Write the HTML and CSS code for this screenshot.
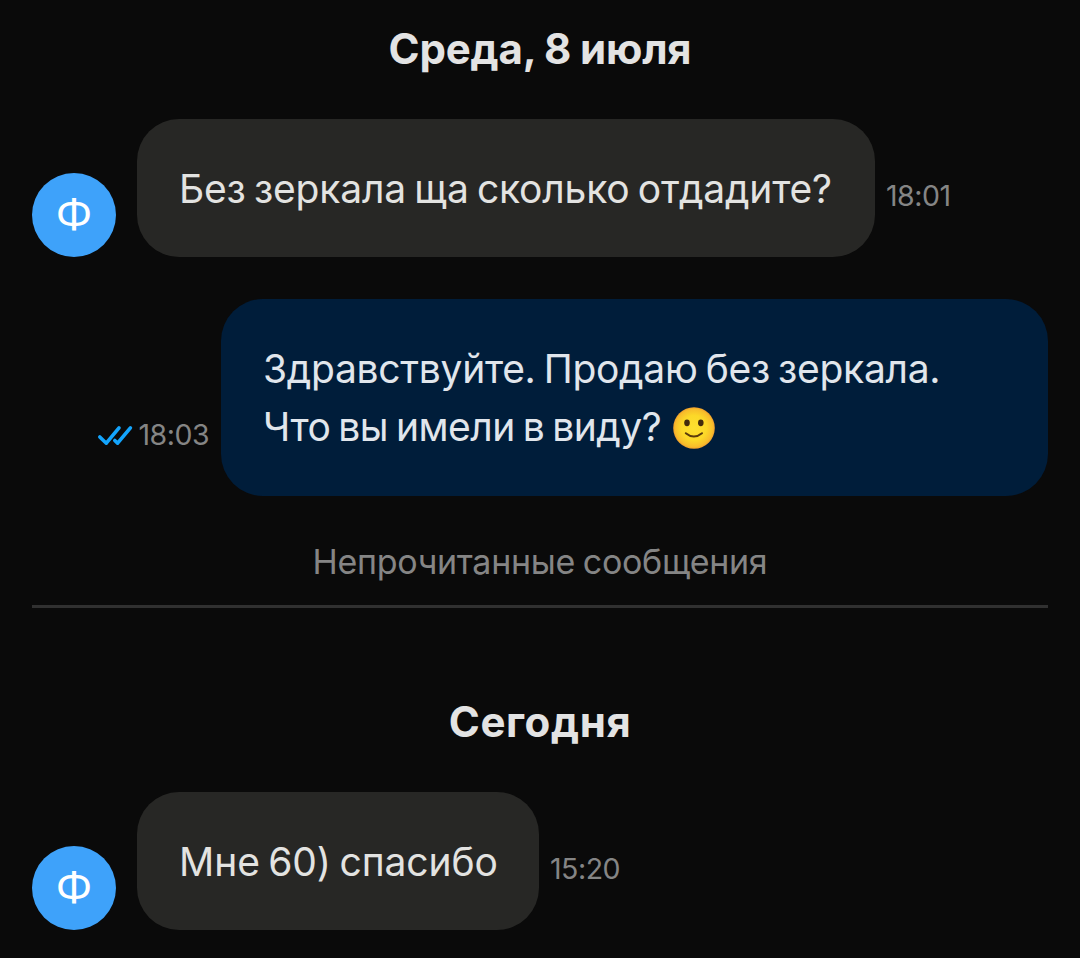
FILE: index.html
```
<!DOCTYPE html>
<html lang="ru">
<head>
    <meta charset="UTF-8">
    <meta name="viewport" content="width=device-width, initial-scale=1.0">
    <title>Чат</title>
    <link rel="stylesheet" href="styles.css">
</head>
<body>
    <main class="chat">
        <h2 class="day day-wed">Среда, 8 июля</h2>

        <div class="message incoming">
            <div class="avatar">Ф</div>
            <div class="bubble bubble-question"><p class="line">Без зеркала ща сколько отдадите?</p></div>
            <time class="time">18:01</time>
        </div>

        <div class="message outgoing">
            <div class="status">
                <svg class="checks" viewBox="0 0 36 22" width="36" height="22">
                    <path d="M2.8 12 L9.3 18.2 L22 2.8 M17.8 15.4 L20.6 18.2 L33.4 2.8"/>
                </svg>
                <time class="time">18:03</time>
            </div>
            <div class="bubble bubble-reply">
                <p class="line line-hello">Здравствуйте. Продаю без зеркала.</p>
                <p class="line line-what"><span>Что вы имели в виду?</span>
                    <svg class="emoji" viewBox="0 0 42 42" width="42" height="42">
                        <defs>
                            <radialGradient id="face">
                                <stop offset="0" stop-color="#fde030"/>
                                <stop offset="0.6" stop-color="#fcd828"/>
                                <stop offset="0.9" stop-color="#f8bd2b"/>
                                <stop offset="1" stop-color="#f2a02c"/>
                            </radialGradient>
                        </defs>
                        <circle cx="21" cy="21" r="20.8" fill="url(#face)"/>
                        <ellipse cx="14" cy="15.8" rx="2.8" ry="3.4" fill="#422b0d"/>
                        <ellipse cx="27.8" cy="15.8" rx="2.8" ry="3.4" fill="#422b0d"/>
                        <path d="M12.8 26.2 Q20.8 32.8 29 26.2" fill="none" stroke="#5a3a0c" stroke-width="2" stroke-linecap="round"/>
                    </svg>
                </p>
            </div>
        </div>

        <div class="unread"><span>Непрочитанные сообщения</span></div>

        <h2 class="day day-today">Сегодня</h2>

        <div class="message incoming">
            <div class="avatar">Ф</div>
            <div class="bubble bubble-thanks"><p class="line line-thanks">Мне 60) спасибо</p></div>
            <time class="time">15:20</time>
        </div>
    </main>
</body>
</html>
```
FILE: styles.css
```
* {
    margin: 0;
    padding: 0;
    box-sizing: border-box;
}

body {
    font-family: Inter, "Noto Sans", sans-serif;
    background-color: #0a0a0a;
    color: #e3e3e1;
}

.chat {
    padding: 21px 32px 28px;
}

.day {
    font-size: 42px;
    line-height: 56px;
    font-weight: 700;
    color: #e3e3e3;
    text-align: center;
    white-space: nowrap;
}

.day-wed {
    letter-spacing: -0.18px;
    word-spacing: -1px;
}

.day-today {
    letter-spacing: 0.6px;
}

.message {
    display: flex;
    align-items: flex-end;
    margin-top: 42px;
}

.outgoing {
    justify-content: flex-end;
}

.avatar {
    width: 84px;
    height: 84px;
    margin-right: 21px;
    border-radius: 50%;
    background-color: #3ea2fa;
    color: #fff;
    font-family: "Noto Sans", sans-serif;
    font-size: 44px;
    line-height: 79px;
    text-align: center;
}

.bubble {
    padding: 41px 42px 39px;
    border-radius: 42px;
    background-color: #272725;
}

.bubble-question {
    width: 738px;
}

.bubble-reply {
    width: 827px;
    padding-bottom: 40px;
    background-color: #001d3a;
    color: #e1e6ec;
}

.bubble-thanks {
    width: 402px;
}

.line {
    font-size: 39px;
    line-height: 58px;
    letter-spacing: -0.18px;
    word-spacing: -2.5px;
    white-space: nowrap;
}

.line-hello {
    letter-spacing: -0.29px;
}

.line-thanks {
    letter-spacing: -0.07px;
}

.line-what {
    display: flex;
    align-items: center;
    gap: 12px;
    letter-spacing: -0.5px;
}

.emoji {
    margin-top: 1px;
}

.time {
    margin: 0 12px 44px 11px;
    color: #858585;
    font-size: 28.5px;
    line-height: 34px;
    letter-spacing: -0.5px;
}

.status {
    display: flex;
    align-items: flex-end;
}

.status .time {
    margin-left: 5px;
}

.checks {
    margin-bottom: 49px;
    fill: none;
    stroke: #13a4fc;
    stroke-width: 3.6;
    stroke-linecap: round;
    stroke-linejoin: round;
}

.unread {
    margin: 43px 0 86px;
    padding-bottom: 20px;
    border-bottom: 3px solid #303030;
    color: #858585;
    font-size: 34px;
    line-height: 46px;
    letter-spacing: -0.3px;
    word-spacing: -1.5px;
    text-align: center;
}
```
